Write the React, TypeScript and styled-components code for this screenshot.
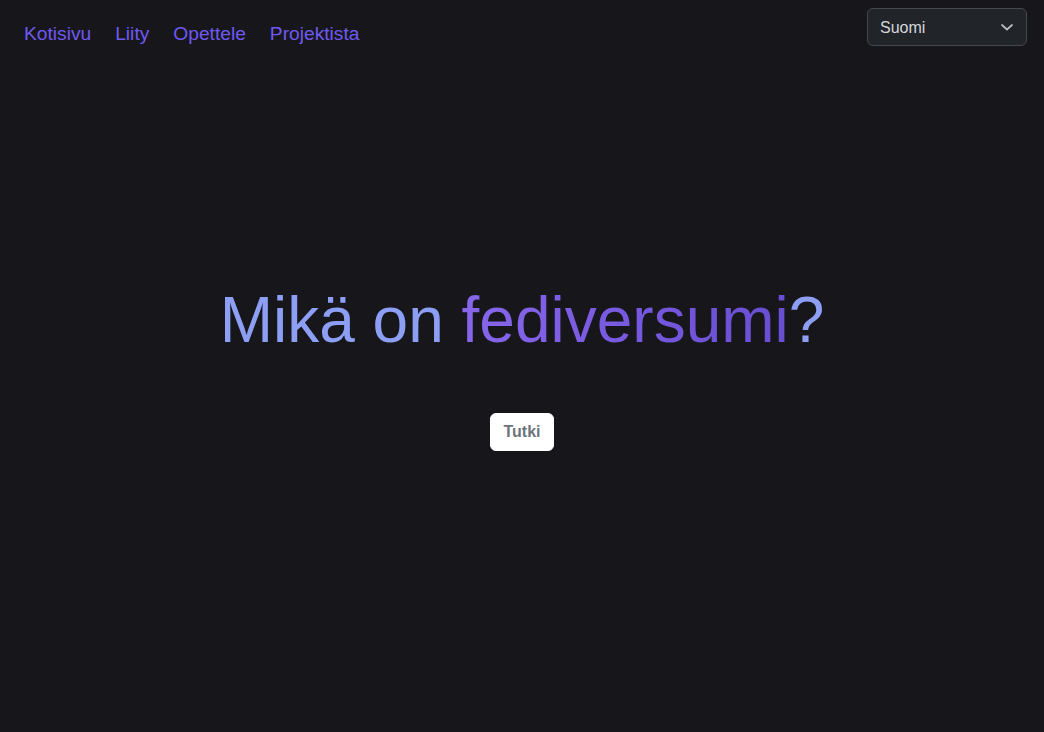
import React from "react";
import styled, { createGlobalStyle } from "styled-components";

const Global = createGlobalStyle`
  html, body { margin: 0; padding: 0; background: #17161b; }
  body { font-family: "Liberation Sans", Arial, sans-serif; }
  * { box-sizing: border-box; }
`;

const Page = styled.div`
  min-height: 100vh;
  display: flex;
  flex-direction: column;
  background: #17161b;
`;

const Header = styled.header`
  display: flex;
  justify-content: space-between;
  align-items: flex-start;
  padding: 8px 17px 0 24px;
`;

const Nav = styled.nav`
  display: flex;
  gap: 24px;
  margin-top: 15px;
`;

const NavLink = styled.a`
  color: #7059f3;
  font-size: 19.2px;
  line-height: normal;
  text-decoration: none;
  cursor: pointer;
`;

const SelectWrap = styled.div`
  position: relative;
  width: 160px;
  height: 38px;
`;

const Select = styled.select`
  appearance: none;
  width: 100%;
  height: 100%;
  background: #212428;
  color: #d5d8dc;
  border: 1px solid #45484d;
  border-radius: 6px;
  padding: 0 36px 0 12px;
  font-family: "Liberation Sans", Arial, sans-serif;
  font-size: 16px;
  outline: none;
`;

const Chevron = styled.svg`
  position: absolute;
  right: 13px;
  top: 13px;
  width: 14px;
  height: 12px;
  pointer-events: none;
`;

const Main = styled.main`
  display: flex;
  flex-direction: column;
  align-items: center;
  padding-top: 237px;
`;

const Heading = styled.h1`
  margin: 0;
  font-size: 64px;
  font-weight: 400;
  line-height: normal;
  color: #8d9ff4;
`;

const Gradient = styled.span`
  background: linear-gradient(90deg, #8766ea 0%, #7658de 55%, #684ed0 100%);
  -webkit-background-clip: text;
  background-clip: text;
  color: transparent;
`;

const Button = styled.button`
  margin-top: 56px;
  background: #ffffff;
  color: #6c757d;
  border: 1px solid #ffffff;
  border-radius: 6px;
  padding: 0 12px;
  height: 38px;
  font-family: "Liberation Sans", Arial, sans-serif;
  font-weight: 700;
  font-size: 16px;
  cursor: pointer;
`;

export default function App() {
  return (
    <Page>
      <Global />
      <Header>
        <Nav>
          <NavLink>Kotisivu</NavLink>
          <NavLink>Liity</NavLink>
          <NavLink>Opettele</NavLink>
          <NavLink>Projektista</NavLink>
        </Nav>
        <SelectWrap>
          <Select defaultValue="fi">
            <option value="fi">Suomi</option>
            <option value="en">English</option>
          </Select>
          <Chevron viewBox="0 0 14 12" fill="none">
            <path d="M2 4l5 4.5L12 4" stroke="#b9bcc0" strokeWidth="1.7" strokeLinecap="round" strokeLinejoin="round" />
          </Chevron>
        </SelectWrap>
      </Header>
      <Main>
        <Heading>
          Mikä on <Gradient>fediversumi</Gradient>?
        </Heading>
        <Button>Tutki</Button>
      </Main>
    </Page>
  );
}
